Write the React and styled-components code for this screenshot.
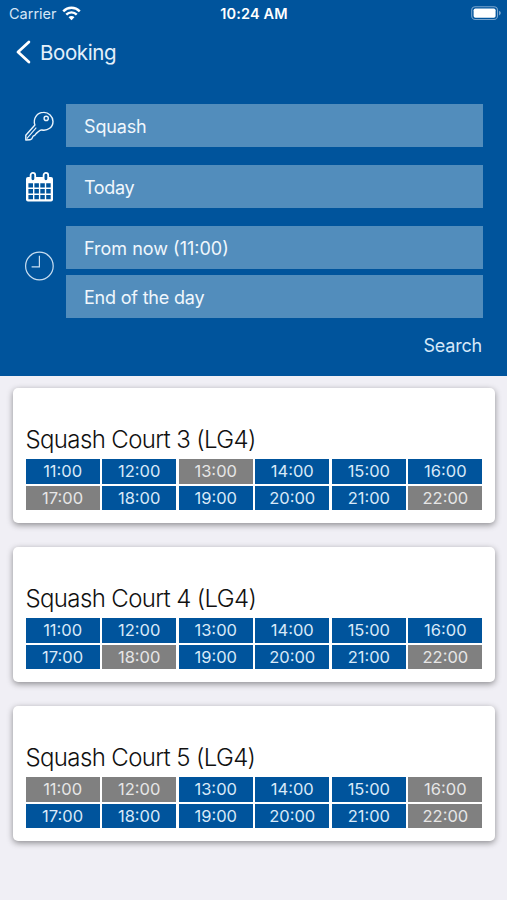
import React from "react"
import styled, { createGlobalStyle } from "styled-components"

const times = ["11:00", "12:00", "13:00", "14:00", "15:00", "16:00", "17:00", "18:00", "19:00", "20:00", "21:00", "22:00"]

const courts = [
  { name: "Squash Court 3 (LG4)", taken: ["13:00", "17:00", "22:00"] },
  { name: "Squash Court 4 (LG4)", taken: ["18:00", "22:00"] },
  { name: "Squash Court 5 (LG4)", taken: ["11:00", "12:00", "16:00", "22:00"] },
]

const WifiIcon = () => (
  <svg width="19" height="14.5" viewBox="0 0 20 15" fill="none" stroke="#fff" strokeWidth="2.6">
    <path d="M1.3 5.4a12.3 12.3 0 0 1 17.4 0" />
    <path d="M4.5 8.9a7.7 7.7 0 0 1 11 0" />
    <path d="M6.9 11.7a4.3 4.3 0 0 1 6.2 0L10 14.8z" fill="#fff" stroke="none" />
  </svg>
)

const BatteryIcon = () => (
  <svg width="30" height="15" viewBox="0 0 30 15">
    <rect x="0.7" y="0.7" width="25.8" height="12.8" rx="3.6" fill="none" stroke="#78a4cd" strokeWidth="1.1" />
    <rect x="2.6" y="2.5" width="22" height="9.2" rx="1.8" fill="#fff" />
    <path d="M28 4.8q1.9 0.8 1.9 2.3t-1.9 2.3z" fill="#78a4cd" />
  </svg>
)

const BackIcon = () => (
  <svg width="15" height="24" viewBox="0 0 15 24" fill="none" stroke="#fff" strokeWidth="2.8" strokeLinecap="round" strokeLinejoin="round">
    <path d="M12.9 2 2 12l10.9 10" />
  </svg>
)

const KeyIcon = () => (
  <svg width="30" height="30" viewBox="0 0 30 30" fill="none" stroke="#eaf4fc" strokeWidth="1.4" strokeLinejoin="round">
    <path d="M9.9 14C7.7 7.6 12.1 1.4 18.5 1.4a9.2 9.2 0 0 1 9.5 9c0 5.8-5.2 9.6-11 8.6-1.4-.2-2.4.4-3.2 1.3l-2.7 2.3-1.4 1.8-1.6.8-1.3 2.6-2 1L.8 29v-4.7z" />
    <path d="M1.8 27.6 11.3 16.6" strokeWidth="1.1" />
    <circle cx="21.2" cy="7.4" r="2.1" />
  </svg>
)

const CalendarIcon = () => (
  <svg width="30" height="30" viewBox="0 0 30 30">
    <rect x="1" y="5" width="27" height="24.4" rx="2" fill="#fff" />
    <path d="M3.4 11.3H8v4.3H3.4zM9.4 11.3h4.5v4.3H9.4zM15.3 11.3h4.5v4.3h-4.5zM21.2 11.3h4.5v4.3h-4.5zM3.4 17H8v4.6H3.4zM9.4 17h4.5v4.6H9.4zM15.3 17h4.5v4.6h-4.5zM21.2 17h4.5v4.6h-4.5zM3.4 23H8v4.2H3.4zM9.4 23h4.5v4.2H9.4zM15.3 23h4.5v4.2h-4.5zM21.2 23h4.5v4.2h-4.5z" fill="#00549c" />
    <rect x="5.6" y="0.9" width="4.6" height="8.2" rx="2.3" fill="#00549c" stroke="#fff" strokeWidth="1.8" />
    <rect x="18.6" y="0.9" width="4.6" height="8.2" rx="2.3" fill="#00549c" stroke="#fff" strokeWidth="1.8" />
  </svg>
)

const ClockIcon = () => (
  <svg width="30" height="30" viewBox="0 0 30 30" fill="none" stroke="#c8def1" strokeWidth="1.2">
    <circle cx="14.4" cy="15" r="13.8" />
    <path d="M14.4 4.8v11H6.6" />
  </svg>
)

const App = () => {
  return (
    <Screen>
      <GlobalStyle />
      <Header>
        <StatusBar>
          <Carrier>Carrier <WifiIcon /></Carrier>
          <Clock>10:24 AM</Clock>
          <Battery><BatteryIcon /></Battery>
        </StatusBar>
        <NavBar>
          <BackIcon />
          <NavTitle>Booking</NavTitle>
        </NavBar>
        <Form>
          <Row>
            <IconBox><KeyIcon /></IconBox>
            <Field><Label $spacing="-0.15px">Squash</Label></Field>
          </Row>
          <Row>
            <IconBox><CalendarIcon /></IconBox>
            <Field><Label $spacing="-0.35px">Today</Label></Field>
          </Row>
          <Row>
            <IconBox $drop="-13px"><ClockIcon /></IconBox>
            <Fields>
              <Field><Label>From now (11:00)</Label></Field>
              <Field><Label $spacing="-0.2px">End of the day</Label></Field>
            </Fields>
          </Row>
        </Form>
        <Search>Search</Search>
      </Header>
      <List>
        {courts.map((court) => (
          <Card key={court.name}>
            <CourtName>{court.name}</CourtName>
            <Slots>
              {times.map((time) => (
                <Slot key={time} $taken={court.taken.includes(time)}>{time}</Slot>
              ))}
            </Slots>
          </Card>
        ))}
      </List>
    </Screen>
  )
}
export default App;

const GlobalStyle = createGlobalStyle`
*{
box-sizing:border-box;
}
body{
margin:0;
background:#f0eff5;
font-family:Inter, "Liberation Sans", sans-serif;
}
svg{
display:block;
flex-shrink:0;
}
`
const Screen = styled.div`
width:507px;
height:900px;
overflow:hidden;
background:#f0eff5;
`
const Header = styled.div`
height:376px;
background:#00549c;
color:#fff;
`
const StatusBar = styled.div`
height:27px;
padding:0 6px 0 9px;
display:grid;
grid-template-columns:1fr auto 1fr;
align-items:center;
font-size:14.5px;
`
const Carrier = styled.div`
display:flex;
align-items:center;
gap:5px;
color:#d5e6f6;
letter-spacing:0;
`
const Clock = styled.div`
font-weight:600;
font-size:14.5px;
letter-spacing:0.15px;
margin-left:-2px;
`
const Battery = styled.div`
display:flex;
justify-content:flex-end;
`
const NavBar = styled.div`
height:49px;
padding:1px 0 0 16px;
display:flex;
align-items:center;
gap:9px;
`
const NavTitle = styled.div`
font-size:20.5px;
letter-spacing:-0.4px;
color:#e4f0fa;
`
const Form = styled.div`
padding:28.4px 24.5px 0 24px;
display:flex;
flex-direction:column;
gap:18px;
`
const Row = styled.div`
display:flex;
align-items:center;
`
const IconBox = styled.div`
width:42px;
padding-left:1px;
margin-top:${(p) => p.$drop || "0"};
`
const Fields = styled.div`
flex:1;
display:flex;
flex-direction:column;
gap:6px;
`
const Field = styled.div`
flex:1 0 auto;
height:43px;
padding:1px 0 0 18px;
display:flex;
align-items:center;
background:#528dbc;
`
const Label = styled.span`
font-size:18px;
color:#f0f7fc;
letter-spacing:${(p) => p.$spacing || "0"};
`
const Search = styled.div`
padding:16px 25px 0 0;
text-align:right;
font-size:18px;
line-height:24px;
letter-spacing:-0.2px;
color:#d5e8f8;
`
const List = styled.div`
padding:12px 12px 0 13px;
display:flex;
flex-direction:column;
gap:24.5px;
`
const Card = styled.div`
height:134.5px;
padding:36px 12.5px 0;
border-radius:5px;
background:#fff;
box-shadow:0 2px 6px rgba(0,0,0,0.42);
`
const CourtName = styled.div`
height:35px;
font-size:24px;
line-height:31px;
font-weight:300;
letter-spacing:-0.63px;
color:#111;
white-space:nowrap;
`
const Slots = styled.div`
display:grid;
grid-template-columns:repeat(6, 1fr);
grid-auto-rows:24.5px;
gap:2.3px;
`
const Slot = styled.div`
display:flex;
align-items:center;
justify-content:center;
font-size:16.5px;
color:${(p) => (p.$taken ? "#e6e6e6" : "#d8e9f8")};
background:${(p) => (p.$taken ? "#808080" : "#00549c")};
`
